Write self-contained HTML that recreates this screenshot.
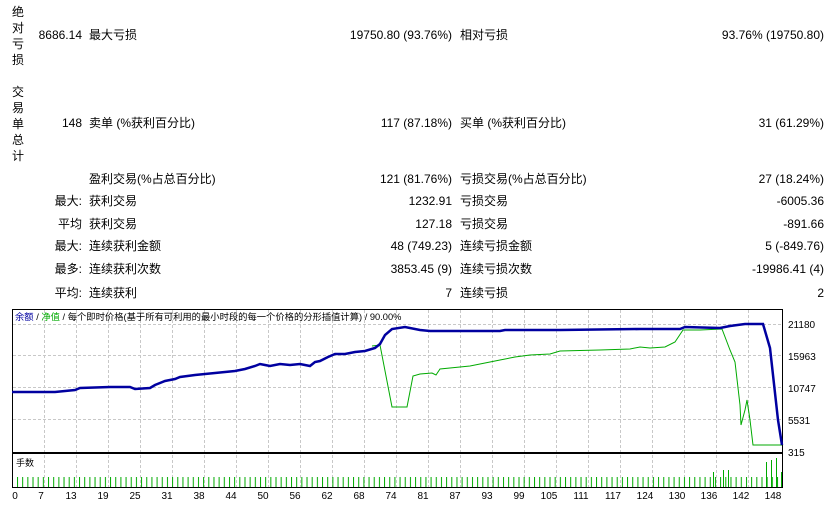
<!DOCTYPE html>
<html><head><meta charset="utf-8"><style>
body{margin:0;width:831px;height:508px;background:#fff;overflow:hidden;position:relative;font-family:"Liberation Sans","Noto Sans CJK SC",sans-serif;font-size:12px;color:#000}
.t{position:absolute;white-space:nowrap;line-height:14px}
.r{text-align:right}
.v{position:absolute;left:12px;width:14px;line-height:16px;font-size:12px}
</style></head><body>
<div class="v" style="top:4px">绝<br>对<br>亏<br>损</div>
<div class="v" style="top:84px">交<br>易<br>单<br>总<br>计</div>

<div class="t r" style="right:749px;top:28px">8686.14</div>
<div class="t" style="left:89px;top:28px">最大亏损</div>
<div class="t r" style="right:379px;top:28px">19750.80 (93.76%)</div>
<div class="t" style="left:460px;top:28px">相对亏损</div>
<div class="t r" style="right:7px;top:28px">93.76% (19750.80)</div>

<div class="t r" style="right:749px;top:116px">148</div>
<div class="t" style="left:89px;top:116px">卖单 (%获利百分比)</div>
<div class="t r" style="right:379px;top:116px">117 (87.18%)</div>
<div class="t" style="left:460px;top:116px">买单 (%获利百分比)</div>
<div class="t r" style="right:7px;top:116px">31 (61.29%)</div>

<div class="t" style="left:89px;top:172px">盈利交易(%占总百分比)</div>
<div class="t r" style="right:379px;top:172px">121 (81.76%)</div>
<div class="t" style="left:460px;top:172px">亏损交易(%占总百分比)</div>
<div class="t r" style="right:7px;top:172px">27 (18.24%)</div>

<div class="t r" style="right:749px;top:194px">最大:</div>
<div class="t" style="left:89px;top:194px">获利交易</div>
<div class="t r" style="right:379px;top:194px">1232.91</div>
<div class="t" style="left:460px;top:194px">亏损交易</div>
<div class="t r" style="right:7px;top:194px">-6005.36</div>

<div class="t r" style="right:749px;top:217px">平均</div>
<div class="t" style="left:89px;top:217px">获利交易</div>
<div class="t r" style="right:379px;top:217px">127.18</div>
<div class="t" style="left:460px;top:217px">亏损交易</div>
<div class="t r" style="right:7px;top:217px">-891.66</div>

<div class="t r" style="right:749px;top:239px">最大:</div>
<div class="t" style="left:89px;top:239px">连续获利金额</div>
<div class="t r" style="right:379px;top:239px">48 (749.23)</div>
<div class="t" style="left:460px;top:239px">连续亏损金额</div>
<div class="t r" style="right:7px;top:239px">5 (-849.76)</div>

<div class="t r" style="right:749px;top:262px">最多:</div>
<div class="t" style="left:89px;top:262px">连续获利次数</div>
<div class="t r" style="right:379px;top:262px">3853.45 (9)</div>
<div class="t" style="left:460px;top:262px">连续亏损次数</div>
<div class="t r" style="right:7px;top:262px">-19986.41 (4)</div>

<div class="t r" style="right:749px;top:286px">平均:</div>
<div class="t" style="left:89px;top:286px">连续获利</div>
<div class="t r" style="right:379px;top:286px">7</div>
<div class="t" style="left:460px;top:286px">连续亏损</div>
<div class="t r" style="right:7px;top:286px">2</div>

<svg width="831" height="508" style="position:absolute;left:0;top:0" font-family="Liberation Sans, Noto Sans CJK SC, sans-serif">
<defs>
<pattern id="vb" x="17" y="0" width="5.17" height="508" patternUnits="userSpaceOnUse"><rect x="0" y="477" width="1" height="11" fill="#00aa00"/></pattern>
</defs>
<g stroke="#c8c8c8" stroke-dasharray="3,2" stroke-width="1">
<line x1="13" y1="324.5" x2="782" y2="324.5"/><line x1="13" y1="355.5" x2="782" y2="355.5"/><line x1="13" y1="387.5" x2="782" y2="387.5"/><line x1="13" y1="419.5" x2="782" y2="419.5"/>
<path d="M44.5 310V487M76.5 310V487M108.5 310V487M140.5 310V487M172.5 310V487M204.5 310V487M236.5 310V487M268.5 310V487M300.5 310V487M332.5 310V487M364.5 310V487M396.5 310V487M428.5 310V487M460.5 310V487M492.5 310V487M524.5 310V487M556.5 310V487M588.5 310V487M620.5 310V487M652.5 310V487M684.5 310V487M716.5 310V487M748.5 310V487"/>
</g>
<rect x="17" y="470" width="765" height="18" fill="url(#vb)"/>
<g stroke="#00aa00" stroke-width="1">
<path d="M766.5 487V462M771.5 487V460M776.5 487V458M781.5 487V472M713.5 487V472M723.5 487V470M728.5 487V470"/>
</g>
<rect x="12.5" y="309.5" width="770" height="143" fill="none" stroke="#000"/>
<rect x="12.5" y="453.5" width="770" height="34" fill="none" stroke="#000"/>
<polyline fill="none" stroke="#00aa00" stroke-width="1" points="372,346 380,345 392,407 407,407 413,376 420,374 432,373 436,375 440,369 470,366 490,362 500,360 515,357 530,355 550,354 560,351 600,350 630,349 640,347 650,348 665,347 675,342 683,330 700,330 722,329 730,350 735,362 740,405 741,425 745,410 747,400 750,420 753,445 782,445"/>
<polyline fill="none" stroke="#0000a0" stroke-width="2.5" points="12,392 55,392 75,390 80,388 110,387 130,387 135,389 150,388 155,385 165,381 175,379 180,377 195,375 215,373 235,371 245,369 255,366 260,364 265,365 270,366 280,364 290,365 300,364 310,366 315,362 320,361 328,357 335,354 345,354 355,352 365,351 375,348 380,344 385,335 392,329 405,327 420,330 430,331 500,331 505,330 560,330 640,329 680,329 685,327 720,328 730,326 745,324 763,324 770,348 778,420 782,445"/>
<text x="15" y="320" font-size="9.3"><tspan fill="#0000a0">余额</tspan> / <tspan fill="#00aa00">净值</tspan> / 每个即时价格(基于所有可利用的最小时段的每一个价格的分形插值计算) / 90.00%</text>
<text x="16" y="466" font-size="9">手数</text>
<g font-size="10">
<text x="788" y="328">21180</text><text x="788" y="360">15963</text><text x="788" y="392">10747</text><text x="788" y="424">5531</text><text x="788" y="456">315</text>
</g>
<g font-size="10" text-anchor="middle">
<text x="15" y="499">0</text><text x="41" y="499">7</text><text x="71" y="499">13</text><text x="103" y="499">19</text><text x="135" y="499">25</text><text x="167" y="499">31</text><text x="199" y="499">38</text><text x="231" y="499">44</text><text x="263" y="499">50</text><text x="295" y="499">56</text><text x="327" y="499">62</text><text x="359" y="499">68</text><text x="391" y="499">74</text><text x="423" y="499">81</text><text x="455" y="499">87</text><text x="487" y="499">93</text><text x="519" y="499">99</text><text x="549" y="499">105</text><text x="581" y="499">111</text><text x="613" y="499">117</text><text x="645" y="499">124</text><text x="677" y="499">130</text><text x="709" y="499">136</text><text x="741" y="499">142</text><text x="773" y="499">148</text>
</g>
</svg>
</body></html>
